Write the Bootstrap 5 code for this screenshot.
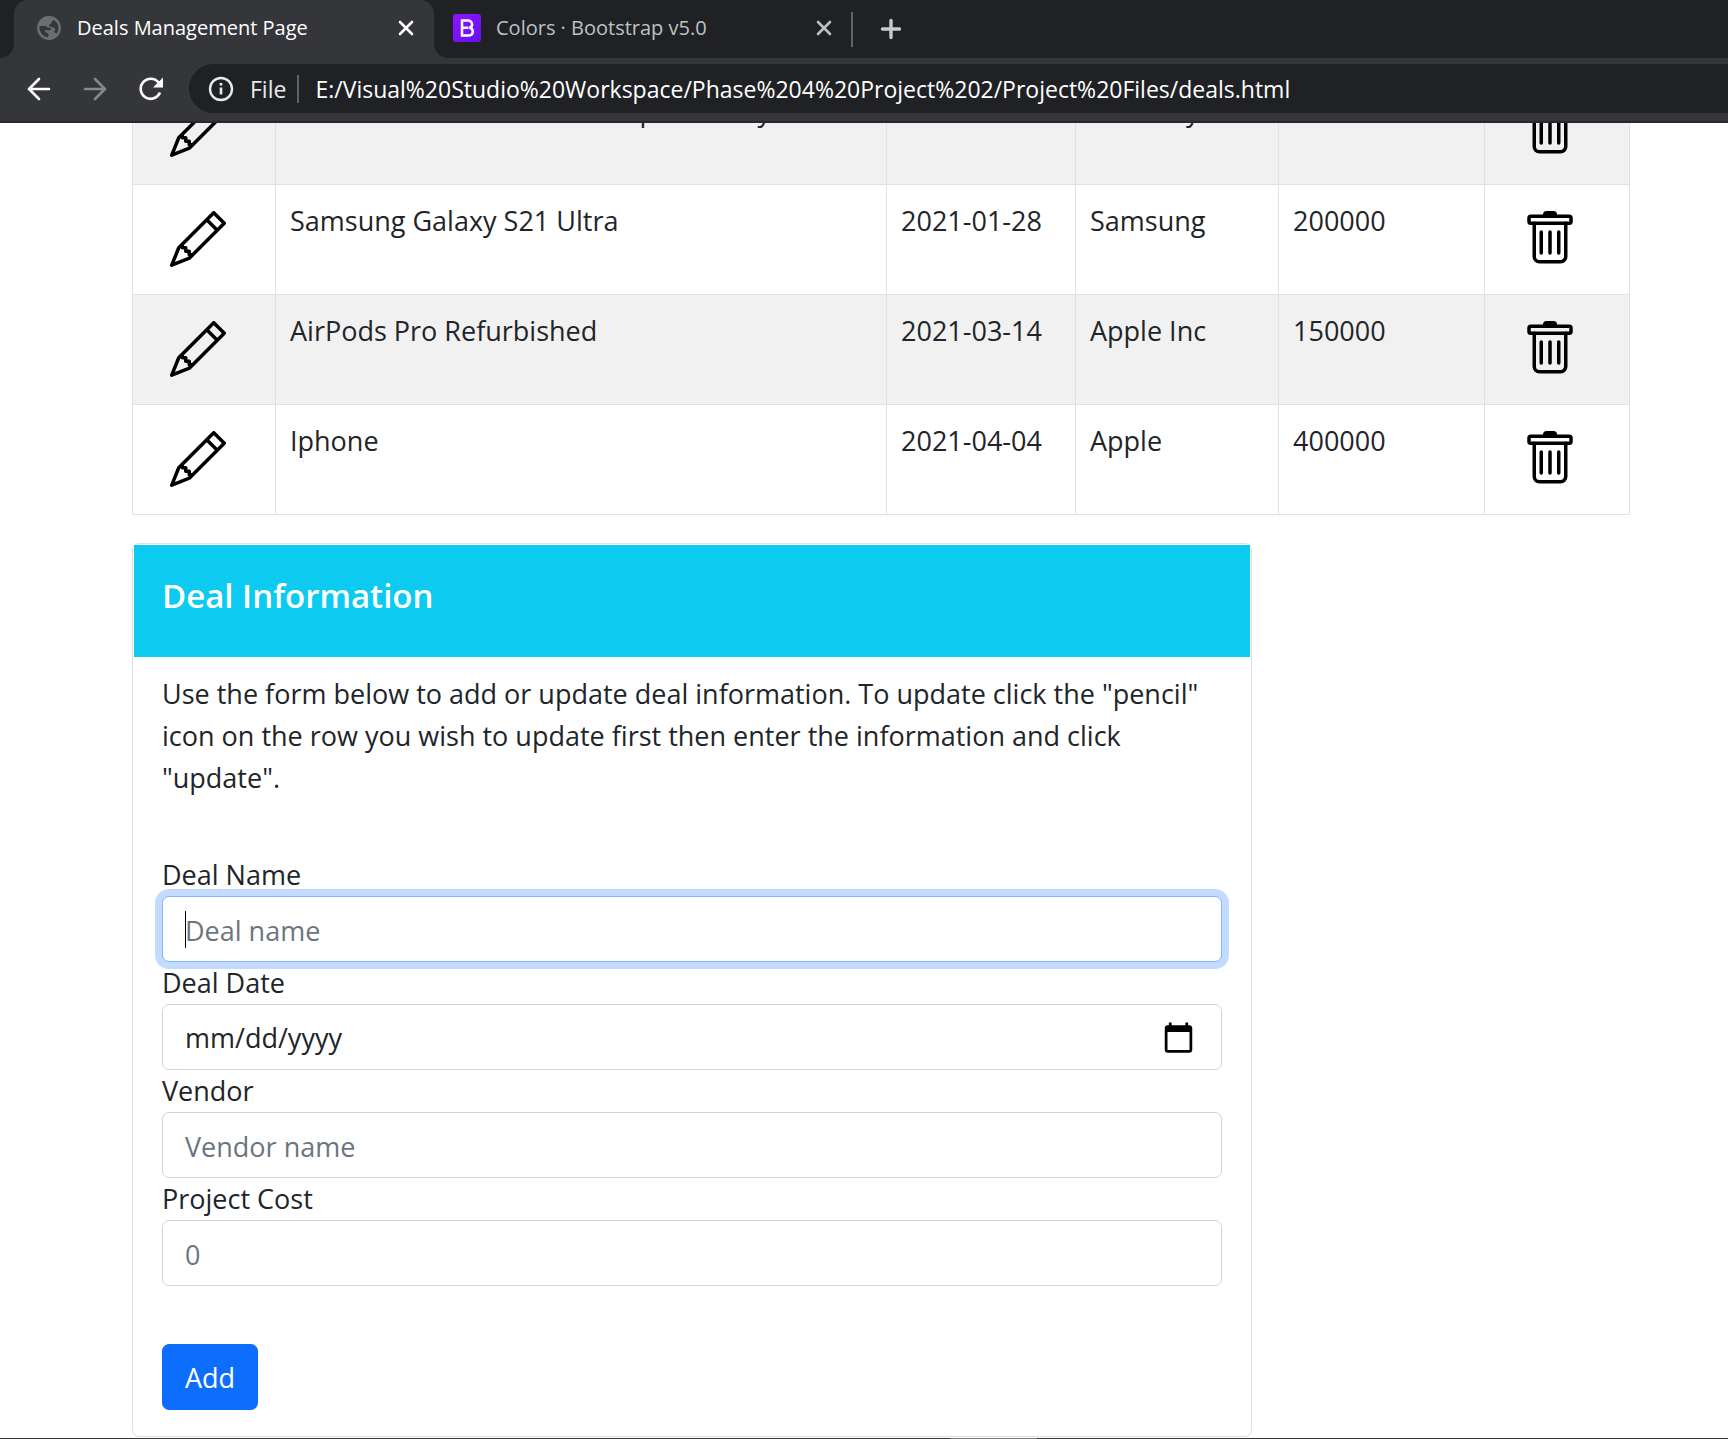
<!DOCTYPE html>
<html lang="en">
<head>
<meta charset="utf-8">
<meta name="viewport" content="width=device-width, initial-scale=1">
<title>Deals Management Page</title>
<link href="https://cdn.jsdelivr.net/npm/bootstrap@5.3.0/dist/css/bootstrap.min.css" rel="stylesheet">
<style>
:root { --chrome-dark: #202124; --chrome-mid: #35363a; }
body { font-family: "Open Sans", "Noto Sans", sans-serif; font-size: 27px; line-height: 42px; color: #212529; }

/* browser frame */
.tab-strip { background: var(--chrome-dark); height: 58px; padding-left: 14px; }
.browser-tab { height: 58px; font-size: 20px; line-height: 28px; color: #bdc1c6; text-decoration: none; }
.browser-tab.is-active { flex: 0 0 420px; background: var(--chrome-mid); color: #fff; border-radius: 14px 14px 0 0; padding: 0 20px 2px 22px; }
.browser-tab.is-idle { width: 417px; padding: 0 19px 2px 19px; border-radius: 0 0 0 14px; background: var(--chrome-dark); }
.idle-wrap { background: linear-gradient(90deg, var(--chrome-mid) 20px, var(--chrome-dark) 20px); }
.edge-left { flex: 0 0 14px; height: 58px; margin-left: -14px; background: var(--chrome-mid); }
.edge-left::before { content: ""; display: block; height: 58px; background: var(--chrome-dark); border-radius: 0 0 14px 0; }
.tab-icon { margin-right: 15px; }
.tab-rule { width: 2px; height: 35px; background: #5f6368; }
.chrome-btn { background: none; border: 0; padding: 0; line-height: 0; color: inherit; }
.new-tab { margin-left: 27px; color: #c8cacd; }
.tool-bar { background: var(--chrome-mid); height: 65px; padding: 7px 0 9px 27px; border-bottom: 2px solid #27282b; }
.omnibox { background: var(--chrome-dark); height: 49px; border-radius: 25px 0 0 25px; padding-left: 19px; margin-left: 26px; color: #e8eaed; font-size: 23px; line-height: 32px; }
.omnibox input { background: none; border: 0; outline: 0; color: #fff; padding: 0; }
.omni-rule { width: 2px; height: 28px; background: #5f6368; margin: 0 16px 0 11px; }
.window-edge { height: 1px; background: #35363a; }
.window-edge span { display: block; height: 1px; width: 5%; margin-left: 55%; background: #77787b; }

/* page */
.page-view { padding: 0 98px 0 132px; }
.deal-table { margin: -49px 0 28px; --bs-table-striped-bg: #f1f1f1; --bs-table-color: #212529; --bs-table-striped-color: #212529; table-layout: fixed; border-color: #dee2e6; }
.deal-table > tbody > tr > td { padding: 15px 14px 13px; height: 110px; }
.col-edit { width: 143px; }
.col-date { width: 189px; }
.col-vendor { width: 203px; }
.col-cost { width: 206px; }
.col-delete { width: 145px; }
.icon-btn { border: 0; background: none; padding: 11px 23px 13px; display: block; line-height: 0; color: #000; }
.deal-row { --bs-gutter-x: 16px; }
.deal-card { padding: 1px; border-radius: 7px; border-color: #dfdfdf; }
.deal-head { background: #0dcaf0; color: #fff; height: 112px; padding: 28px; }
.deal-head h5 { font-size: 33px; line-height: 46px; font-weight: 600; margin: 0; }
.deal-body { padding: 16px 28px 25px; }
.deal-text { margin-bottom: 55px; }
.field-box { height: 66px; padding: 11px 22px 9px; font-size: 27px; line-height: 42px; border: 1px solid #ced4da; border-radius: 7px; }
.field-box.is-current { border-color: #86b7fe; box-shadow: 0 0 0 7px #c2dbfe; }
.field-box::placeholder { color: #6c757d; }
.field-box::-webkit-calendar-picker-indicator { width: 35px; height: 35px; padding: 0; margin-right: 3px; }
.text-caret { position: absolute; left: 23px; top: 15px; width: 1px; height: 37px; background: #000; }
.add-btn { margin-top: 58px; height: 66px; padding: 11px 22px 9px; font-size: 27px; line-height: 42px; border-radius: 7px; }
</style>
<script src="https://cdn.jsdelivr.net/npm/bootstrap@5.3.0/dist/js/bootstrap.bundle.min.js" defer></script>
</head>
<body class="vh-100 d-flex flex-column overflow-hidden bg-white">

<svg width="0" height="0" class="position-absolute" aria-hidden="true">
  <symbol id="pencil" viewBox="0 0 16 16"><path fill="currentColor" d="M12.146.146a.5.5 0 0 1 .708 0l3 3a.5.5 0 0 1 0 .708l-10 10a.5.5 0 0 1-.168.11l-5 2a.5.5 0 0 1-.65-.65l2-5a.5.5 0 0 1 .11-.168l10-10zM11.207 2.5 13.5 4.793 14.793 3.5 12.5 1.207 11.207 2.5zm1.586 3L10.5 3.207 4 9.707V10h.5a.5.5 0 0 1 .5.5v.5h.5a.5.5 0 0 1 .5.5v.5h.293l6.5-6.5zm-9.761 5.175-.106.106-1.528 3.821 3.821-1.528.106-.106A.5.5 0 0 1 5 12.5V12h-.5a.5.5 0 0 1-.5-.5V11h-.5a.5.5 0 0 1-.468-.325z"/></symbol>
  <symbol id="trash" viewBox="0 0 16 16"><path fill="currentColor" d="M6 1.5V1a1 1 0 0 1 1-1h2a1 1 0 0 1 1 1v.5z"/><g fill="none" stroke="currentColor" stroke-linecap="round"><rect x="2" y="1.5" width="12" height="2" rx=".5"/><path d="M3.5 3.5V13A1.5 1.5 0 0 0 5 14.5h6a1.5 1.5 0 0 0 1.5-1.5V3.5M5.5 6v6M8 6v6M10.5 6v6"/></g></symbol>
  <symbol id="cross" viewBox="0 0 16 16"><path d="M2 2l12 12M14 2L2 14" fill="none" stroke="currentColor" stroke-width="2.6" stroke-linecap="round"/></symbol>
</svg>

<header>
  <nav class="tab-strip d-flex align-items-center" aria-label="Tabs">
    <div class="edge-left"></div>
    <div class="browser-tab is-active d-flex align-items-center">
      <svg class="tab-icon" width="26" height="26" viewBox="0 0 24 24" aria-hidden="true"><path fill="#6b6e72" d="M12 1a11 11 0 1 0 0 22 11 11 0 0 0 0-22zm-1.1 19.7A8.8 8.8 0 0 1 3.2 12c0-.68.08-1.33.24-1.96h5.2c1 0 1.5 1.1 2.6 1.4 1.2.3 2.3 0 2.7.9.4 1-.5 1.7-1.5 1.7H8.7c-.6 0-.8.6-.4 1.1l1.4 1.3c1 .8 2.1.6 2.1 1.7 0 .9-.9 1-.9 2.56zm8.3-3.6c-.5-.7-1.5-1-2.6-.9-.5 0-.6-.5-.3-.9.9-1.2 1.7-1.5 1.4-2.7-.3-1-1.9-.5-2.700-1.300-.9-.8-2.900-.2-3.100-1.300-.2-1 .9-1.500 1.700-1.900.8-.5.3-1.600 1.200-2.200.7-.5 1.200-.8 1.300-1.500a8.800 8.800 0 0 1 3.100 12.700z"/></svg>
      <span>Deals Management Page</span>
      <button class="chrome-btn ms-auto" aria-label="Close tab"><svg width="16" height="16"><use href="#cross"/></svg></button>
    </div>
    <div class="idle-wrap">
      <div class="browser-tab is-idle d-flex align-items-center">
        <svg class="tab-icon" width="28" height="28" viewBox="0 0 28 28" aria-hidden="true"><defs><linearGradient id="bg" x2="1" y2="1"><stop stop-color="#9013fe"/><stop offset="1" stop-color="#6610f2"/></linearGradient></defs><rect width="28" height="28" rx="3" fill="url(#bg)"/><path d="M9 6.500v15h5.800c3.200 0 5-1.500 5-4.100 0-2.100-1.400-3.400-3.500-3.600 1.700-.3 2.800-1.600 2.800-3.200 0-2.500-1.700-4.100-4.500-4.100zM9 13.700h6.500" fill="none" stroke="#fff" stroke-width="2.500"/></svg>
        <span>Colors · Bootstrap v5.0</span>
        <button class="chrome-btn ms-auto" aria-label="Close tab"><svg width="16" height="16"><use href="#cross"/></svg></button>
      </div>
    </div>
    <span class="tab-rule"></span>
    <button class="chrome-btn new-tab" aria-label="New tab"><svg width="22" height="22" viewBox="0 0 22 22"><path d="M11 2.500v17M2.500 11h17" stroke="currentColor" stroke-width="3.400" stroke-linecap="round"/></svg></button>
  </nav>
  <div class="tool-bar d-flex align-items-center">
    <button class="chrome-btn" aria-label="Back"><svg width="24" height="24" viewBox="0 0 24 24" fill="none" stroke="#fff" stroke-width="2.600" stroke-linecap="round"><path d="M22 12H2M12 2L2 12l10 10"/></svg></button>
    <button class="chrome-btn ms-4 ps-2" aria-label="Forward"><svg width="24" height="24" viewBox="0 0 24 24" fill="none" stroke="#86888a" stroke-width="2.600" stroke-linecap="round"><path d="M2 12h20M12 2l10 10-10 10"/></svg></button>
    <button class="chrome-btn ms-4 ps-2" aria-label="Reload"><svg width="24" height="24" viewBox="0 0 24 24"><path d="M21 15.500A10 10 0 1 1 19.500 5.500" fill="none" stroke="#fff" stroke-width="2.600"/><path d="M24 .5v10H14z" fill="#fff"/></svg></button>
    <div class="omnibox d-flex align-items-center flex-grow-1">
      <svg width="26" height="26" viewBox="0 0 26 26" aria-hidden="true"><circle cx="13" cy="13" r="11" fill="none" stroke="#e8eaed" stroke-width="2.400"/><path d="M13 11.500v7M13 7v2.600" stroke="#e8eaed" stroke-width="2.600"/></svg>
      <label class="ms-3" for="address">File</label>
      <span class="omni-rule"></span>
      <input class="flex-grow-1" id="address" type="text" value="E:/Visual%20Studio%20Workspace/Phase%204%20Project%202/Project%20Files/deals.html">
    </div>
  </div>
</header>

<main class="page-view flex-grow-1 overflow-hidden">
  <table class="table table-bordered table-striped deal-table">
    <colgroup><col class="col-edit"><col><col class="col-date"><col class="col-vendor"><col class="col-cost"><col class="col-delete"></colgroup>
    <tbody>
      <tr>
        <td><button class="icon-btn" aria-label="Edit"><svg width="56" height="56"><use href="#pencil"/></svg></button></td>
        <td>Nintendo Switch Console: Open Today</td><td>2021-02-02</td><td>Best Buy</td><td>100000</td>
        <td><button class="icon-btn" aria-label="Delete"><svg width="56" height="56"><use href="#trash"/></svg></button></td>
      </tr>
      <tr>
        <td><button class="icon-btn" aria-label="Edit"><svg width="56" height="56"><use href="#pencil"/></svg></button></td>
        <td>Samsung Galaxy S21 Ultra</td><td>2021-01-28</td><td>Samsung</td><td>200000</td>
        <td><button class="icon-btn" aria-label="Delete"><svg width="56" height="56"><use href="#trash"/></svg></button></td>
      </tr>
      <tr>
        <td><button class="icon-btn" aria-label="Edit"><svg width="56" height="56"><use href="#pencil"/></svg></button></td>
        <td>AirPods Pro Refurbished</td><td>2021-03-14</td><td>Apple Inc</td><td>150000</td>
        <td><button class="icon-btn" aria-label="Delete"><svg width="56" height="56"><use href="#trash"/></svg></button></td>
      </tr>
      <tr>
        <td><button class="icon-btn" aria-label="Edit"><svg width="56" height="56"><use href="#pencil"/></svg></button></td>
        <td>Iphone</td><td>2021-04-04</td><td>Apple</td><td>400000</td>
        <td><button class="icon-btn" aria-label="Delete"><svg width="56" height="56"><use href="#trash"/></svg></button></td>
      </tr>
    </tbody>
  </table>

  <div class="row deal-row">
    <div class="col-9">
      <div class="card deal-card">
        <div class="deal-head"><h5>Deal Information</h5></div>
        <form class="deal-body">
          <p class="deal-text">Use the form below to add or update deal information. To update click the "pencil" icon on the row you wish to update first then enter the information and click "update".</p>
          <label class="d-block" for="dealName">Deal Name</label>
          <div class="position-relative">
            <input class="form-control field-box is-current" id="dealName" type="text" placeholder="Deal name">
            <span class="text-caret"></span>
          </div>
          <label class="d-block" for="dealDate">Deal Date</label>
          <input class="form-control field-box" id="dealDate" type="date">
          <label class="d-block" for="vendor">Vendor</label>
          <input class="form-control field-box" id="vendor" type="text" placeholder="Vendor name">
          <label class="d-block" for="cost">Project Cost</label>
          <input class="form-control field-box" id="cost" type="number" placeholder="0">
          <button class="btn btn-primary add-btn" type="button">Add</button>
        </form>
      </div>
    </div>
  </div>
</main>
<div class="window-edge"><span></span></div>
</body>
</html>
